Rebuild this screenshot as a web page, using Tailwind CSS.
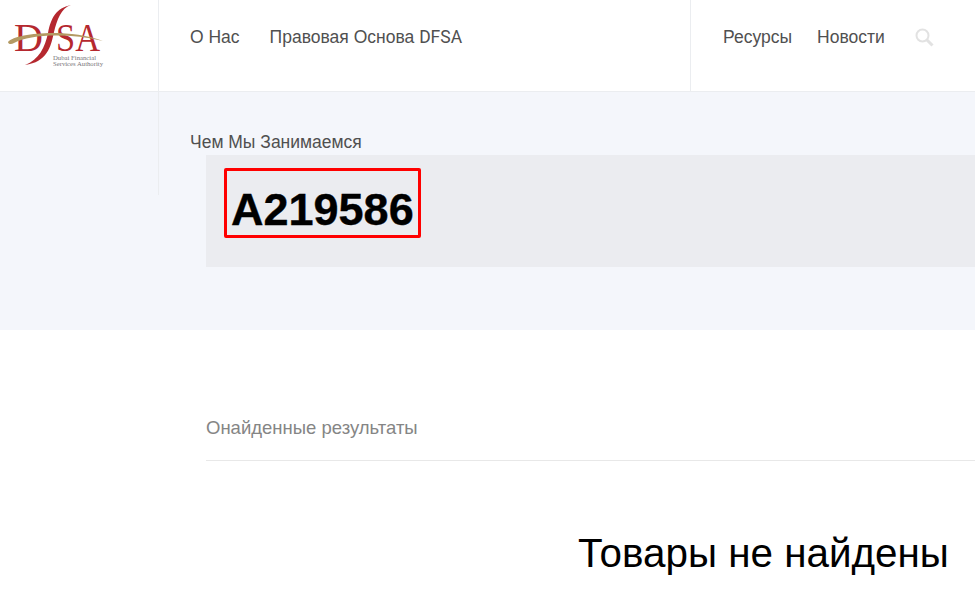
<!DOCTYPE html>
<html lang="ru">
<head>
  <meta charset="UTF-8">
  <title>DFSA</title>
  <script src="https://cdn.jsdelivr.net/npm/@tailwindcss/browser@4"></script>
</head>
<body class="bg-white h-[591px] overflow-hidden font-['Liberation_Sans',sans-serif]">
  <!-- Header -->
  <header class="flex h-[92px] border-b border-[#ebedf0] bg-white">
    <div class="w-[159px] shrink-0 border-r border-[#ebedf0]">
      <svg width="110" height="70" viewBox="0 0 110 70">
        <text x="14" y="51" font-family="Liberation Serif" font-size="41" textLength="29" lengthAdjust="spacingAndGlyphs" fill="#b5282f">D</text>
        <path d="M71 5C61 8 57 20 54 32C51 47 47 62 25 65C39 60 45 47 48 33C51 18 56 8 71 5Z" fill="#b5282f"/>
        <text x="56" y="51" font-family="Liberation Serif" font-size="41" textLength="44" lengthAdjust="spacingAndGlyphs" fill="#b5282f">SA</text>
        <path d="M8 42C16 33 68 28 103 41C70 33 30 34 14 43C11 45 8 44 8 42Z" fill="#b39a63"/>
        <text x="53" y="59.5" font-family="Liberation Serif" font-size="5.6" textLength="43" lengthAdjust="spacingAndGlyphs" fill="#77757a">Dubai Financial</text>
        <text x="53" y="65.5" font-family="Liberation Serif" font-size="5.6" textLength="50" lengthAdjust="spacingAndGlyphs" fill="#77757a">Services Authority</text>
      </svg>
    </div>
    <nav class="flex-1 flex items-start pt-[26px] pl-[31px] gap-[30px] text-[17.5px] leading-[22px] text-[#505050]">
      <a>О Нас</a>
      <a>Правовая Основа <span class="font-['Roboto',sans-serif] leading-none">DFSA</span></a>
    </nav>
    <div class="w-[285px] shrink-0 border-l border-[#ebedf0] flex items-start pt-[26px] pl-[32px] gap-[25px] text-[17.5px] leading-[22px] text-[#505050]">
      <a>Ресурсы</a>
      <a>Новости</a>
      <svg class="mt-[2px] ml-[5px]" width="19" height="19" viewBox="0 0 19 19" fill="none" stroke="#e2e2e2">
        <circle cx="7.5" cy="7.5" r="6" stroke-width="2"/>
        <path d="M12 12l5.5 5.5" stroke-width="3"/>
      </svg>
    </div>
  </header>

  <!-- Search summary -->
  <section class="relative h-[238px] bg-[#f4f6fb]">
    <div class="absolute left-[158px] top-0 h-[103px] w-px bg-[#ebedf0]"></div>
    <p class="pl-[190px] pt-[39px] text-[17.5px] leading-[22px] text-[#505050]">Чем Мы Занимаемся</p>
    <div class="ml-[206px] mt-[2px] h-[112px] bg-[#ebecf0] pl-[18px] pt-[13px]">
      <div class="w-[197px] h-[70px] border-[3px] border-[#ff0000] rounded-[2px] flex items-center pl-[4px] pt-[14px] font-bold text-[45px] text-black [-webkit-text-stroke:0.4px_black]">A219586</div>
    </div>
  </section>

  <!-- Results -->
  <section class="pl-[206px]">
    <div class="mt-[86px] h-[45px] border-b border-[#e8e8e8] text-[18.5px] leading-[24px] text-[#858585]">Онайденные результаты</div>
  </section>
  <h2 class="mt-[69px] pl-[578px] text-[40.4px] leading-[46px] text-black whitespace-nowrap">Товары не найдены</h2>
</body>
</html>
